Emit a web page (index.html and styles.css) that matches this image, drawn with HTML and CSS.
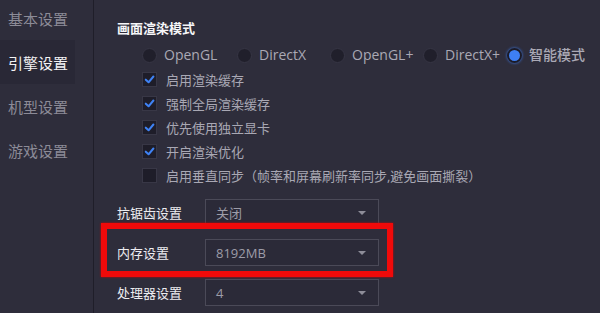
FILE: index.html
```html
<!DOCTYPE html>
<html lang="zh-CN">
<head>
<meta charset="utf-8">
<title>引擎设置</title>
<link rel="stylesheet" href="styles.css">
</head>
<body>
<div class="app">
  <nav class="sidebar">
    <div class="nav-item">基本设置</div>
    <div class="nav-item active">引擎设置</div>
    <div class="nav-item">机型设置</div>
    <div class="nav-item">游戏设置</div>
  </nav>
  <main class="main">
    <div class="section-title">画面渲染模式</div>
    <div class="radio-row">
      <label class="radio"><span class="dot"></span><span class="opt">OpenGL</span></label>
      <label class="radio"><span class="dot"></span><span class="opt">DirectX</span></label>
      <label class="radio"><span class="dot"></span><span class="opt">OpenGL+</span></label>
      <label class="radio"><span class="dot"></span><span class="opt">DirectX+</span></label>
      <label class="radio"><span class="dot on"></span><span class="opt">智能模式</span></label>
    </div>
    <div class="checks">
      <label class="check"><span class="box on"><svg viewBox="0 0 14 14"><path d="M3 7.2 L6 10 L11.2 3.8" /></svg></span><span>启用渲染缓存</span></label>
      <label class="check"><span class="box on"><svg viewBox="0 0 14 14"><path d="M3 7.2 L6 10 L11.2 3.8" /></svg></span><span>强制全局渲染缓存</span></label>
      <label class="check"><span class="box on"><svg viewBox="0 0 14 14"><path d="M3 7.2 L6 10 L11.2 3.8" /></svg></span><span>优先使用独立显卡</span></label>
      <label class="check"><span class="box on"><svg viewBox="0 0 14 14"><path d="M3 7.2 L6 10 L11.2 3.8" /></svg></span><span>开启渲染优化</span></label>
      <label class="check"><span class="box"></span><span>启用垂直同步（帧率和屏幕刷新率同步,避免画面撕裂）</span></label>
    </div>
    <div class="selects">
      <div class="field">
        <span class="field-label">抗锯齿设置</span>
        <div class="select"><span>关闭</span><span class="arrow"></span></div>
      </div>
      <div class="field highlight">
        <span class="field-label">内存设置</span>
        <div class="select"><span>8192MB</span><span class="arrow"></span></div>
      </div>
      <div class="field">
        <span class="field-label">处理器设置</span>
        <div class="select"><span>4</span><span class="arrow"></span></div>
      </div>
    </div>
  </main>
</div>
</body>
</html>
```
FILE: styles.css
```css
* { box-sizing: border-box; }
html, body {
  margin: 0;
  padding: 0;
  width: 600px;
  height: 313px;
  overflow: hidden;
  background: #2e2d3b;
  font-family: "Open Sans", "Noto Sans CJK SC", sans-serif;
}
.app {
  display: flex;
  height: 313px;
}
.sidebar {
  width: 94px;
  flex: none;
  border-right: 1px solid #1f1e29;
  margin-top: -4px;
  display: flex;
  flex-direction: column;
}
.nav-item {
  width: 75px;
  height: 44px;
  display: flex;
  align-items: center;
  padding-left: 8px;
  font-size: 15px;
  color: #8c8b97;
}
.nav-item.active {
  background: #292836;
  color: #f2f2f4;
}
.main {
  flex: 1;
  padding: 18px 0 0 23px;
  position: relative;
}
.section-title {
  height: 20px;
  line-height: 20px;
  font-size: 13px;
  color: #f6f6f8;
  font-weight: 600;
}
.radio-row {
  margin-top: 7px;
  margin-left: 25px;
  height: 20px;
  display: grid;
  grid-template-columns: 95px 93px 93px 84px auto;
  align-items: center;
}
.radio {
  display: flex;
  align-items: center;
  gap: 7px;
  white-space: nowrap;
}
.dot {
  width: 15px;
  height: 15px;
  border-radius: 50%;
  background: #201f2b;
  border: 1px solid #363544;
  flex: none;
}
.dot.on {
  background: #3e7ff2;
  border: 2px solid #1c1b27;
  box-shadow: 0 0 3px #3e7ff2;
}
.opt {
  font-size: 14px;
  color: #aaa9b5;
  line-height: 20px;
  font-weight: 500;
}
.checks {
  margin-top: 2px;
  margin-left: 25px;
  display: flex;
  flex-direction: column;
}
.check {
  height: 24px;
  display: flex;
  align-items: center;
  gap: 9px;
  font-size: 13px;
  color: #a9a8b4;
  white-space: nowrap;
}
.box {
  width: 15px;
  height: 15px;
  flex: none;
  background: #1e1d29;
  border: 1px solid #383746;
  display: flex;
  align-items: center;
  justify-content: center;
}
.box svg {
  width: 13px;
  height: 13px;
}
.box svg path {
  fill: none;
  stroke: #3f82f4;
  stroke-width: 2.2;
  stroke-linecap: round;
  stroke-linejoin: round;
}
.selects {
  margin-top: 12px;
  display: flex;
  flex-direction: column;
  gap: 13px;
}
.field {
  display: flex;
  align-items: center;
  height: 27px;
  width: 262px;
  position: relative;
}
.field-label {
  width: 88px;
  flex: none;
  font-size: 13px;
  color: #ececf0;
}
.select {
  width: 174px;
  height: 27px;
  border: 1px solid #4b4a58;
  background: #2b2a38;
  display: flex;
  align-items: center;
  justify-content: space-between;
  padding: 0 12px 0 10px;
  font-size: 13px;
  color: #9d9ca8;
}
.arrow {
  width: 0;
  height: 0;
  border-left: 4px solid transparent;
  border-right: 4px solid transparent;
  border-top: 4px solid #8e8d99;
}
.field.highlight::after {
  content: "";
  position: absolute;
  left: -16px;
  right: -14px;
  top: -16px;
  bottom: -11px;
  border: 6px solid #f00a0a;
  box-shadow: 0 0 2px #c00;
  pointer-events: none;
}
```
